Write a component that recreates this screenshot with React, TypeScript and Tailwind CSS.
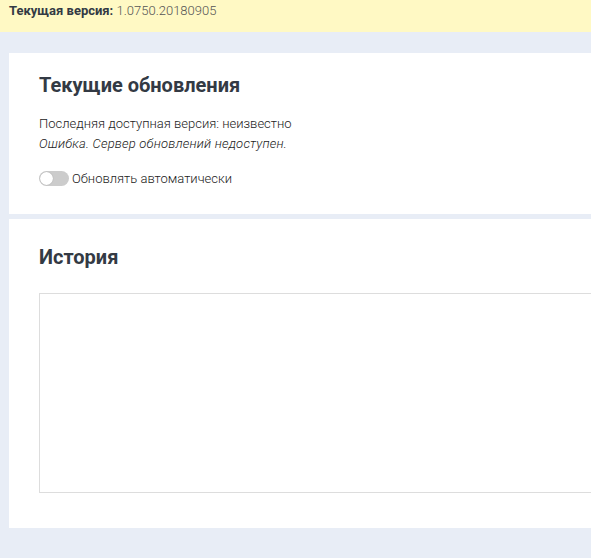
export default function App() {
    return (
        <div className="w-[591px] h-[558px] overflow-hidden bg-[#e8edf6] font-['Roboto',sans-serif]">
            <div className="h-[32px] bg-[#fff9c4] px-[9px] pt-[1px] text-[13px] font-light text-[#555]">
                <span className="font-bold text-[#333a44]">Текущая версия:</span> 1.0750.20180905
            </div>
            <div className="w-[800px] pt-[21px] pl-[9px]">
                <div className="bg-white h-[161px] px-[30px] pt-[19px]">
                    <h2 className="text-[20px] leading-[26px] font-bold text-[#333a44]">Текущие обновления</h2>
                    <p className="mt-[16px] text-[13px] leading-[20px] font-light text-[#222]">Последняя доступная версия: неизвестно</p>
                    <p className="text-[13px] leading-[20px] font-light italic tracking-[0.2px] text-[#222]">Ошибка. Сервер обновлений недоступен.</p>
                    <label className="mt-[15px] flex items-center gap-[3px] text-[13px] font-light text-[#222]">
                        <span className="relative inline-block w-[30px] h-[15px] rounded-full bg-[#ccc]">
                            <span className="absolute left-[1px] top-[1px] w-[13px] h-[13px] rounded-full bg-white shadow-[0_0_1px_rgba(0,0,0,0.3)]" />
                        </span>
                        Обновлять автоматически
                    </label>
                </div>
                <div className="mt-[5px] bg-white h-[309px] px-[30px] pt-[25px]">
                    <h2 className="text-[20px] leading-[26px] font-bold text-[#333a44]">История</h2>
                    <div className="mt-[23px] h-[200px] border border-[#ddd]" />
                </div>
            </div>
        </div>
    );
}
